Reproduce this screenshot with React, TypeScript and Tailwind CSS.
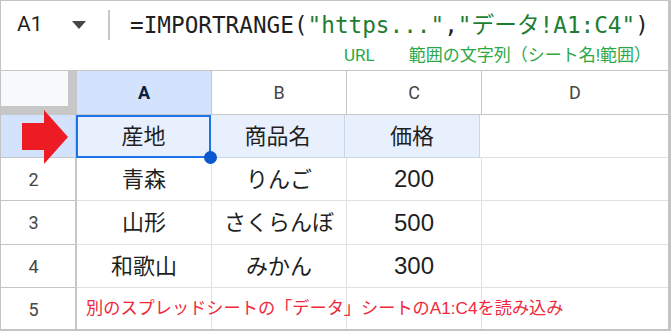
import React from 'react'

const ROWS = [
  { n: '2', a: '青森', b: 'りんご', c: '200' },
  { n: '3', a: '山形', b: 'さくらんぼ', c: '500' },
  { n: '4', a: '和歌山', b: 'みかん', c: '300' },
]

const cellFont = { fontFamily: '"Liberation Sans", "Noto Sans CJK JP", sans-serif' }

export default function App() {
  return (
    <div className="relative w-[671px] h-[331px] bg-white border-t border-l border-r-[3px] border-b-2 border-[#c4c4c4] overflow-hidden text-[#1f1f1f]">
      {/* Formula bar */}
      <div className="h-[70px] border-b border-[#c4c7c5] flex flex-col">
        <div className="flex items-center h-[46px] pt-[2px]">
          <div className="w-[54px] pl-[16px] text-[21px]" style={{ fontFamily: 'Roboto, sans-serif' }}>A1</div>
          <svg className="ml-[17px]" width="14" height="8" viewBox="0 0 14 8">
            <path d="M0 0h14L7 8z" fill="#444746" />
          </svg>
          <div className="ml-[22px] w-[2px] h-[30px] bg-[#c7c7c7]" />
          <div className="ml-[20px] text-[22.7px] whitespace-nowrap" style={{ fontFamily: '"DejaVu Sans Mono", "Noto Sans CJK JP", monospace' }}>
            <span>=IMPORTRANGE(</span>
            <span className="text-[#1e7d32]">"https..."</span>
            <span>,</span>
            <span className="text-[#1e7d32]">"データ!A1:C4"</span>
            <span>)</span>
          </div>
        </div>
        <div className="flex items-center pl-[343px] text-[17px] text-[#2aa845] leading-none" style={{ fontFamily: 'Roboto, "Noto Sans CJK JP", sans-serif' }}>
          <span>URL</span>
          <span className="ml-[34px]">範囲の文字列（シート名!範囲）</span>
        </div>
      </div>

      {/* Column headers */}
      <div className="flex h-[44px] border-b border-[#c4c7c5]" style={{ fontFamily: 'Roboto, sans-serif' }}>
        <div className="w-[76px] bg-[#c7c7c7] -mb-px">
          <div className="w-[67px] h-[35px] bg-[#f8f9fa]" />
        </div>
        <div className="w-[135px] bg-[#d3e3fd] border-r border-[#c4c7c5] flex items-center justify-center text-[18px] font-bold text-[#0b1f3a]">A</div>
        <div className="w-[135px] border-r border-[#c4c7c5] flex items-center justify-center text-[18px] text-[#444746]">B</div>
        <div className="w-[135px] border-r border-[#c4c7c5] flex items-center justify-center text-[18px] text-[#444746]">C</div>
        <div className="flex-1 flex items-center justify-center text-[18px] text-[#444746]">D</div>
      </div>

      {/* Row 1 */}
      <div className="flex h-[43px]" style={cellFont}>
        <div className="w-[76px] bg-[#d3e3fd] border-r-2 border-b border-[#c4c7c5]" />
        <div className="relative w-[135px] bg-[#e8f0fe] border-2 border-[#1a73e8] -ml-px flex items-center justify-center text-[22px]">
          産地
          <div className="absolute -right-[8px] -bottom-[8px] w-[13px] h-[13px] rounded-full bg-[#0b57d0] z-10" />
        </div>
        <div className="w-[134px] bg-[#e8f0fe] border-r border-b border-[#c9d6e6] flex items-center justify-center text-[22px]">商品名</div>
        <div className="w-[135px] bg-[#e8f0fe] border-r border-b border-[#c9d6e6] flex items-center justify-center text-[22px]">価格</div>
        <div className="flex-1 border-b border-[#e1e1e1]" />
      </div>

      {ROWS.map((r, i) => (
        <div key={r.n} className={`flex ${i === 1 ? 'h-[44px]' : 'h-[43px]'}`} style={cellFont}>
          <div className="w-[76px] border-r-2 border-b border-[#c4c7c5] flex items-center justify-center pr-[9px] text-[18px] text-[#444746]" style={{ fontFamily: 'Roboto, sans-serif' }}>{r.n}</div>
          <div className="w-[135px] border-r border-b border-[#e1e1e1] flex items-center justify-center text-[22px]">{r.a}</div>
          <div className="w-[135px] border-r border-b border-[#e1e1e1] flex items-center justify-center text-[22px] whitespace-nowrap">{r.b}</div>
          <div className="w-[135px] border-r border-b border-[#e1e1e1] flex items-center justify-center text-[24px]">{r.c}</div>
          <div className="flex-1 border-b border-[#e1e1e1]" />
        </div>
      ))}

      {/* Row 5 */}
      <div className="relative flex h-[42px]" style={cellFont}>
        <div className="w-[76px] border-r-2 border-[#c4c7c5] flex items-center justify-center pr-[9px] text-[18px] text-[#444746]" style={{ fontFamily: 'Roboto, sans-serif' }}>5</div>
        <div className="w-[135px] border-r border-[#e1e1e1]" />
        <div className="w-[135px] border-r border-[#e1e1e1]" />
        <div className="w-[135px] border-r border-[#e1e1e1]" />
        <div className="flex-1" />
        <div className="absolute left-[85px] top-0 h-full flex items-center text-[17.2px] text-[#f0283a] whitespace-nowrap">
          別のスプレッドシートの「データ」シートのA1:C4を読み込み
        </div>
      </div>

      {/* Red arrow */}
      <svg className="absolute left-[21px] top-[109px]" width="48" height="54" viewBox="0 0 48 54">
        <path d="M0 13h22V0l24 27-24 27V40H0z" fill="#ed1c24" />
      </svg>
    </div>
  )
}
